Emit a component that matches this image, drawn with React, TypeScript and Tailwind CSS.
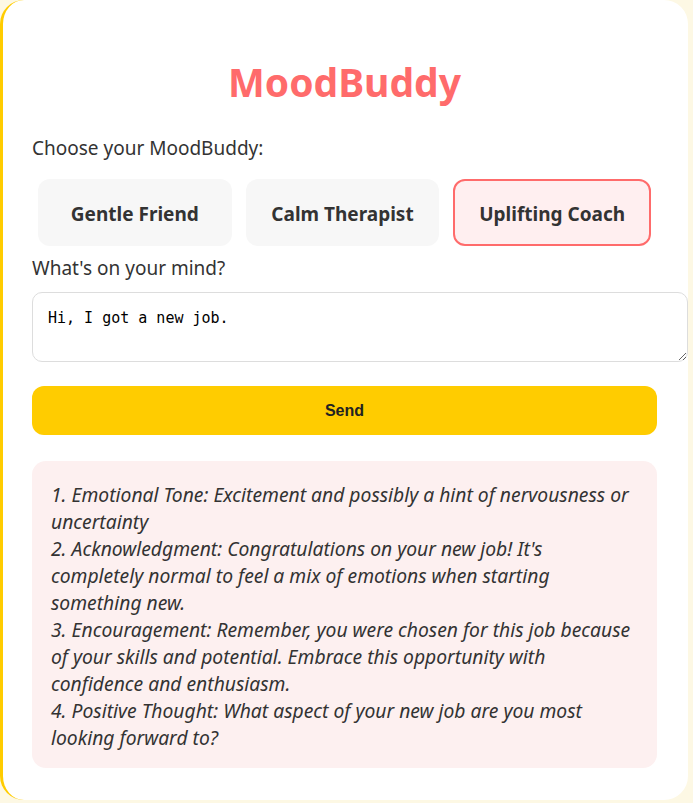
import React from "react";

const lines = [
  "1. Emotional Tone: Excitement and possibly a hint of nervousness or",
  "uncertainty",
  "2. Acknowledgment: Congratulations on your new job! It's",
  "completely normal to feel a mix of emotions when starting",
  "something new.",
  "3. Encouragement: Remember, you were chosen for this job because",
  "of your skills and potential. Embrace this opportunity with",
  "confidence and enthusiasm.",
  "4. Positive Thought: What aspect of your new job are you most",
  "looking forward to?",
];

export default function App() {
  const sans = { fontFamily: '"Noto Sans", "Open Sans", sans-serif' };
  return (
    <div className="min-h-[803px] w-[693px] bg-[#fdf8e4] overflow-hidden" style={sans}>
      <div className="w-[688px] h-[800px] bg-white rounded-[24px] border-l-[3px] border-[#ffcc00] pl-[29px] pr-[31px] pt-[52px] box-border">
        <h1 className="text-center text-[39px] leading-[60px] font-bold text-[#ff6b6b] mb-[24px]">MoodBuddy</h1>
        <div className="text-[19px] leading-[24px] text-[#333]">Choose your MoodBuddy:</div>
        <div className="flex gap-[14px] px-[6px] mt-[19px]">
          <button className="flex-1 h-[67px] pt-[4px] rounded-[12px] bg-[#f7f7f7] text-[19px] font-bold text-[#333]">Gentle Friend</button>
          <button className="flex-1 h-[67px] pt-[4px] rounded-[12px] bg-[#f7f7f7] text-[19px] font-bold text-[#333]">Calm Therapist</button>
          <button className="flex-1 h-[67px] pt-[4px] rounded-[12px] bg-[#ffeff0] border-2 border-[#ff6b6b] text-[19px] font-bold text-[#333]">Uplifting Coach</button>
        </div>
        <div className="text-[19px] leading-[24px] text-[#333] mt-[10px]">What's on your mind?</div>
        <textarea
          className="block mt-[12px] w-[656px] h-[70px] rounded-[10px] border border-[#dddddd] px-[15px] pt-[16px] pb-[14px] text-[15px] leading-[18px] text-black outline-none resize-y"
          style={{ fontFamily: '"DejaVu Sans Mono", "Liberation Mono", monospace' }}
          defaultValue="Hi, I got a new job."
        />
        <button
          className="block w-full mt-[24px] h-[49px] rounded-[12px] bg-[#ffcc00] text-[16px] font-bold text-[#222]"
          style={{ fontFamily: '"Liberation Sans", Arial, sans-serif' }}
        >
          Send
        </button>
        <div className="mt-[26px] rounded-[14px] bg-[#fdf0f0] pl-[19px] pr-[10px] pt-[20px] pb-[17px] text-[19.3px] leading-[27px] italic text-[#333]">
          {lines.map((l, i) => (
            <div key={i} className="whitespace-nowrap">{l}</div>
          ))}
        </div>
      </div>
    </div>
  );
}
